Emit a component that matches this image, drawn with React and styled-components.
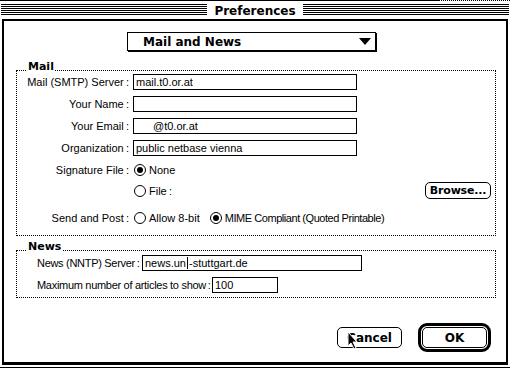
import React from "react";
import styled, { createGlobalStyle } from "styled-components";

const GlobalStyle = createGlobalStyle`
  html, body {
    margin: 0;
    padding: 0;
    background: #fff;
  }
  body {
    font-family: "Liberation Sans", Arial, sans-serif;
    font-size: 11px;
    color: #000;
    overflow: hidden;
  }
  * {
    box-sizing: border-box;
  }
`;

const Window = styled.div`
  position: relative;
  width: 510px;
  height: 368px;
  padding: 0 2px 2px 2px;
  border-bottom: 1px solid #000;
  display: flex;
  flex-direction: column;
`;

const TopLine = styled.div`
  display: flex;
  height: 1px;
  margin: 0 -2px;
`;

const Solid = styled.div`
  flex: 1;
  background: #000;
`;

const Dotted = styled.div`
  width: 72px;
  border-top: 1px dotted #000;
`;

const TitleBar = styled.div`
  height: 18px;
  margin: 0 -1px;
  display: flex;
  justify-content: center;
  align-items: center;
  background: repeating-linear-gradient(to bottom, #000 0 1px, #fff 1px 2px);
  background-size: 100% 12px;
  background-position: 0 3px;
  background-repeat: no-repeat;
`;

const Title = styled.div`
  background: #fff;
  padding: 1px 7px 0 7px;
  font-family: "DejaVu Sans", sans-serif;
  font-weight: bold;
  font-size: 12px;
  line-height: 14px;
`;

const Frame = styled.div`
  flex: 1;
  border: 2px solid #000;
  border-bottom-width: 3px;
  padding-top: 11px;
  display: flex;
  flex-direction: column;
`;

const Popup = styled.div`
  margin-left: 123px;
  width: 249px;
  height: 19px;
  border: 1px solid #000;
  box-shadow: 1px 1px 0 #000;
  display: flex;
  align-items: center;
  justify-content: space-between;
  padding: 0 4px 0 15px;
  font-family: "DejaVu Sans", sans-serif;
  font-weight: bold;
  font-size: 12px;
`;

const Group = styled.div`
  position: relative;
  margin: ${p => p.$top}px 0 0 12px;
  width: 480px;
  border: 1px dotted #000;
  padding: ${p => p.$pad};
`;

const GroupLabel = styled.div`
  position: absolute;
  left: 10px;
  top: -10px;
  background: #fff;
  padding: 0 1px;
  font-family: "DejaVu Sans", sans-serif;
  font-weight: bold;
  font-size: 11px;
  line-height: 11px;
`;

const Row = styled.div`
  display: flex;
  align-items: center;
  margin-top: ${p => p.$top || 0}px;
`;

const Label = styled.div`
  width: ${p => p.$w || 116}px;
  padding-right: ${p => (p.$w ? 0 : 4)}px;
  text-align: ${p => (p.$w ? "left" : "right")};
  letter-spacing: ${p => (p.$w ? "-0.3px" : "0")};
  white-space: nowrap;
`;

const TextBox = styled.div`
  width: ${p => p.$w || 224}px;
  height: 16px;
  border: 1px solid #000;
  padding: 0 0 0 ${p => p.$indent || 2}px;
  line-height: 14px;
  white-space: nowrap;
  overflow: hidden;
`;

const Caret = styled.span`
  display: inline-block;
  width: 1px;
  height: 12px;
  background: #000;
  vertical-align: -2px;
  margin: 0 1px;
`;

const Options = styled.div`
  display: flex;
  align-items: center;
  gap: 10px;
  margin-left: 1px;
`;

const Option = styled.div`
  display: flex;
  align-items: center;
  gap: 3px;
  letter-spacing: ${p => (p.$tight ? "-0.45px" : "0")};
`;

const Radio = styled.span`
  width: 12px;
  height: 12px;
  border: 1px solid #000;
  border-radius: 50%;
  display: grid;
  place-items: center;
  &::after {
    content: "";
    width: 6px;
    height: 6px;
    border-radius: 50%;
    background: ${p => (p.$on ? "#000" : "transparent")};
  }
`;

const Button = styled.div`
  width: ${p => p.$w || 65}px;
  height: ${p => p.$h || 21}px;
  border: 1px solid #000;
  border-radius: 5px;
  display: flex;
  align-items: center;
  justify-content: center;
  font-family: "DejaVu Sans", sans-serif;
  font-weight: bold;
  font-size: ${p => p.$size || 12}px;
  letter-spacing: ${p => (p.$size ? "-0.2px" : "0")};
  margin-left: ${p => (p.$push ? "auto" : "0")};
  margin-right: ${p => p.$right || 0}px;
`;

const DefaultRing = styled.div`
  border: 3px solid #000;
  border-radius: 9px;
  padding: 1px;
`;

const Buttons = styled.div`
  display: flex;
  justify-content: flex-end;
  align-items: center;
  gap: 16px;
  padding-right: 15px;
  margin-top: 25px;
`;

const Pointer = styled.svg`
  position: absolute;
  left: 347px;
  top: 331px;
`;

const RadioOption = ({ on, tight, children }) => (
  <Option $tight={tight}>
    <Radio $on={on} />
    <span>{children}</span>
  </Option>
);

const App = () => {
  return (
    <>
      <GlobalStyle />
      <Window>
        <TopLine>
          <Solid />
          <Dotted />
        </TopLine>
        <TitleBar>
          <Title>Preferences</Title>
        </TitleBar>
        <Frame>
          <Popup>
            <span>Mail and News</span>
            <svg width="12" height="7" viewBox="0 0 12 7">
              <polygon points="0,0 12,0 6,7" fill="#000" />
            </svg>
          </Popup>

          <Group $top={19} $pad="3px 0 11px 0">
            <GroupLabel>Mail</GroupLabel>
            <Row>
              <Label>Mail (SMTP) Server&thinsp;:</Label>
              <TextBox>mail.t0.or.at</TextBox>
            </Row>
            <Row $top={6}>
              <Label>Your Name&thinsp;:</Label>
              <TextBox />
            </Row>
            <Row $top={6}>
              <Label>Your Email&thinsp;:</Label>
              <TextBox $indent={19}>@t0.or.at</TextBox>
            </Row>
            <Row $top={6}>
              <Label>Organization&thinsp;:</Label>
              <TextBox>public netbase vienna</TextBox>
            </Row>
            <Row $top={8}>
              <Label>Signature File&thinsp;:</Label>
              <Options>
                <RadioOption on>None</RadioOption>
              </Options>
            </Row>
            <Row $top={6}>
              <Label />
              <Options>
                <RadioOption>File&thinsp;:</RadioOption>
              </Options>
              <Button $w={66} $h={17} $size={11} $push $right={4}>Browse...</Button>
            </Row>
            <Row $top={13}>
              <Label>Send and Post&thinsp;:</Label>
              <Options>
                <RadioOption>Allow 8-bit</RadioOption>
                <RadioOption on tight>MIME Compliant (Quoted Printable)</RadioOption>
              </Options>
            </Row>
          </Group>

          <Group $top={14} $pad="4px 0 4px 20px">
            <GroupLabel>News</GroupLabel>
            <Row>
              <Label $w={105}>News (NNTP) Server&thinsp;:</Label>
              <TextBox $w={220}>
                news.un<Caret />-stuttgart.de
              </TextBox>
            </Row>
            <Row $top={6}>
              <Label $w={175}>Maximum number of articles to show&thinsp;:</Label>
              <TextBox $w={66}>100</TextBox>
            </Row>
          </Group>

          <Buttons>
            <Button>Cancel</Button>
            <DefaultRing>
              <Button>OK</Button>
            </DefaultRing>
          </Buttons>
        </Frame>

        <Pointer width="11" height="19" viewBox="0 0 11 19">
          <polygon
            points="1,1 1,15 4,12 7,18 9,17 6,11 10,11"
            fill="#000"
            stroke="#fff"
            strokeWidth="1"
          />
        </Pointer>
      </Window>
    </>
  );
};

export default App;
